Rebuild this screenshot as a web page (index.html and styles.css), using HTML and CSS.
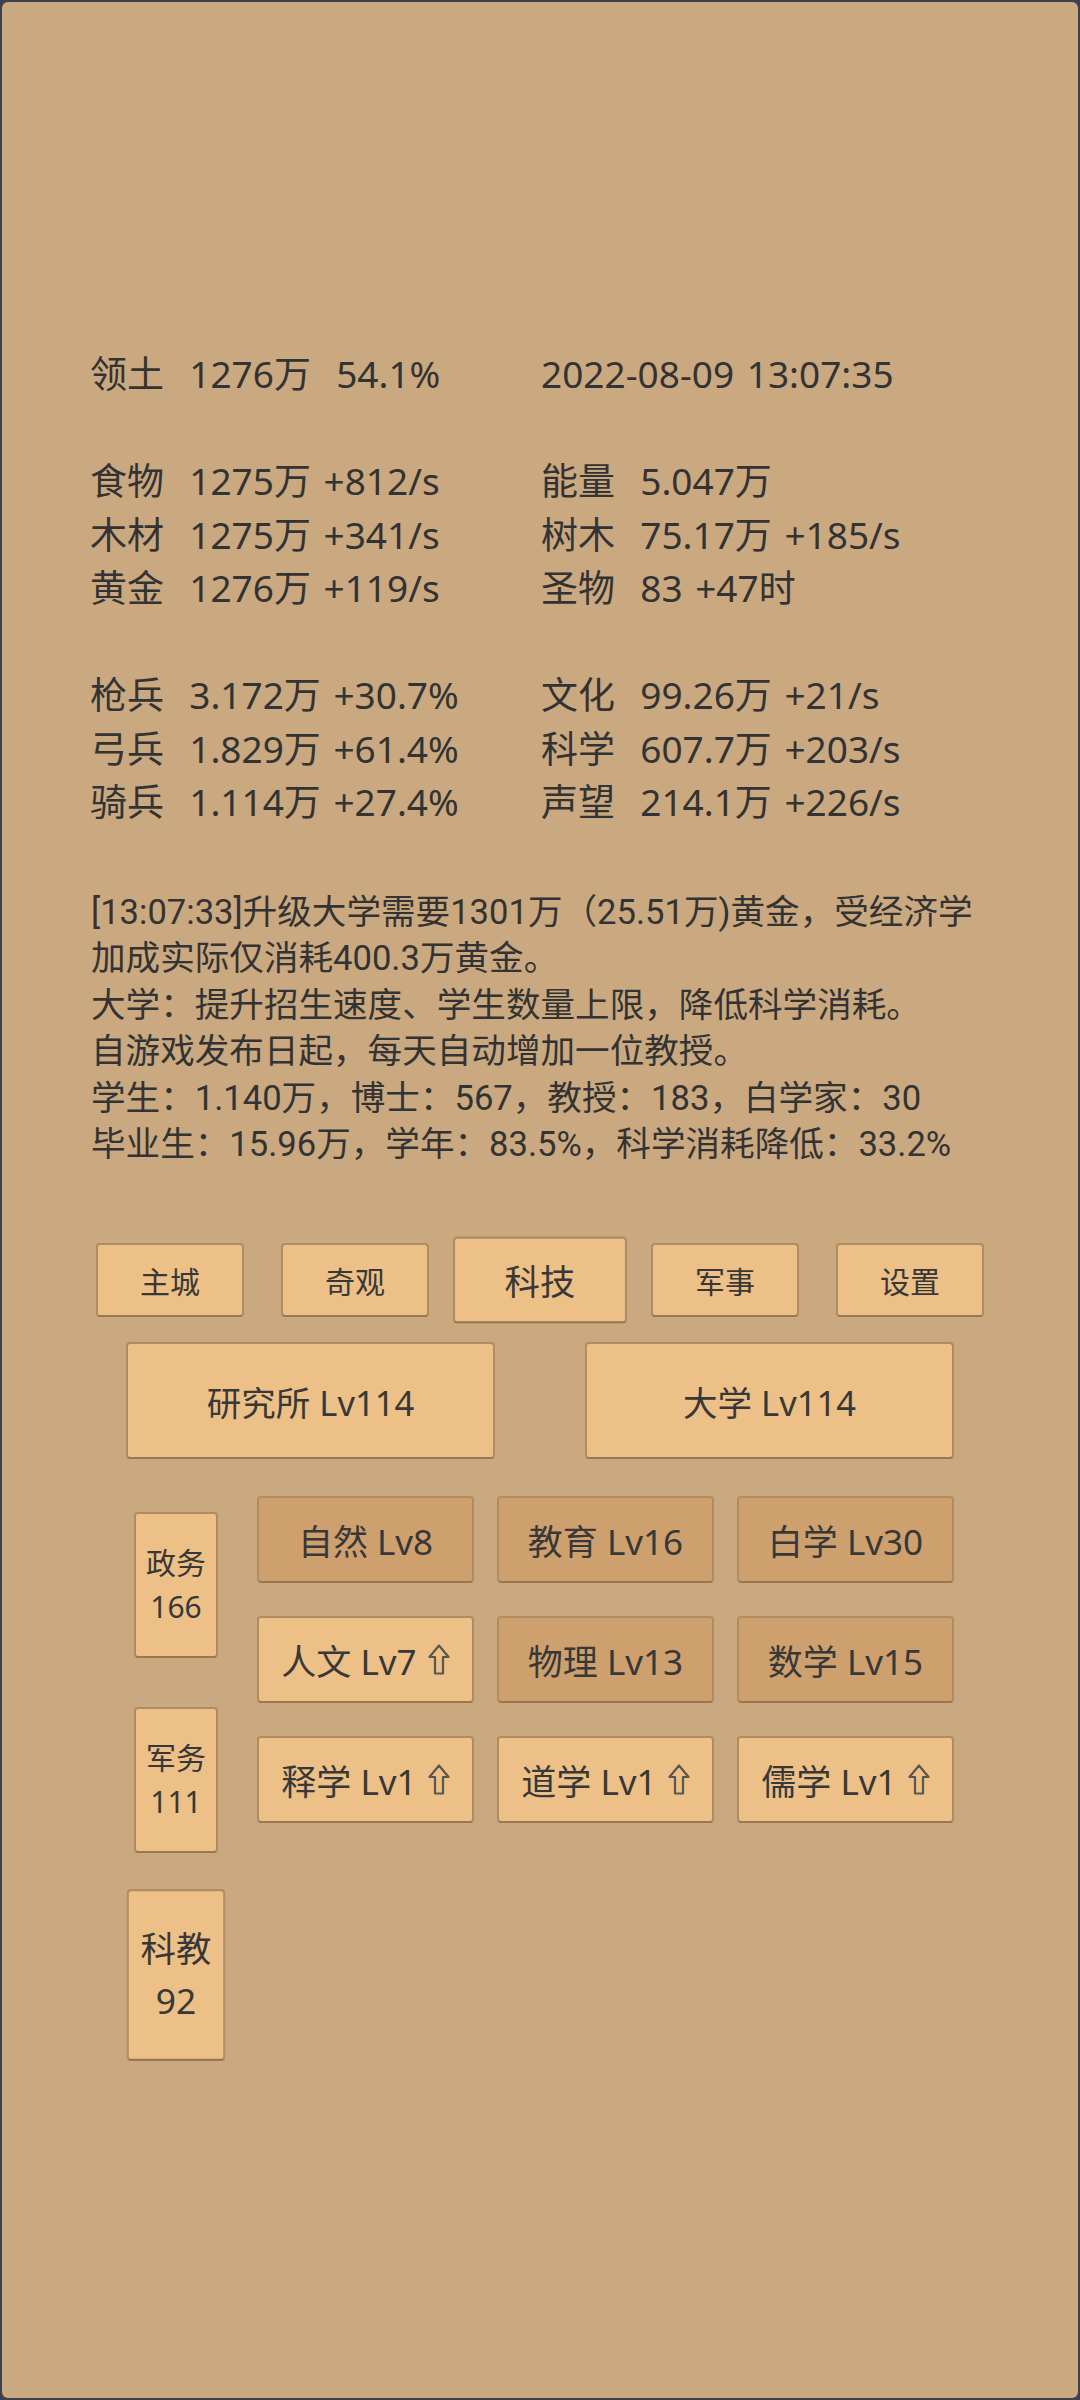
FILE: index.html
```html
<!DOCTYPE html>
<html lang="zh">
<head>
  <meta charset="UTF-8">
  <meta name="viewport" content="width=device-width, initial-scale=1.0">
  <title>科技</title>
  <link rel="stylesheet" href="styles.css">
</head>
<body>
  <div class="screen">

    <div class="stats">
      <div class="cell">领土  1276万  54.1%</div>
      <div class="cell">2022-08-09 13:07:35</div>
      <div class="blank"></div>
      <div class="cell">食物  1275万 +812/s</div>
      <div class="cell">能量  5.047万</div>
      <div class="cell">木材  1275万 +341/s</div>
      <div class="cell">树木  75.17万 +185/s</div>
      <div class="cell">黄金  1276万 +119/s</div>
      <div class="cell">圣物  83 +47时</div>
      <div class="blank"></div>
      <div class="cell">枪兵  3.172万 +30.7%</div>
      <div class="cell">文化  99.26万 +21/s</div>
      <div class="cell">弓兵  1.829万 +61.4%</div>
      <div class="cell">科学  607.7万 +203/s</div>
      <div class="cell">骑兵  1.114万 +27.4%</div>
      <div class="cell">声望  214.1万 +226/s</div>
    </div>

    <div class="log">
      <p>[13:07:33]升级大学需要1301万（25.51万)黄金，受经济学加成实际仅消耗400.3万黄金。</p>
      <p>大学：提升招生速度、学生数量上限，降低科学消耗。</p>
      <p>自游戏发布日起，每天自动增加一位教授。</p>
      <p>学生：1.140万，博士：567，教授：183，白学家：30</p>
      <p>毕业生：15.96万，学年：83.5%，科学消耗降低：33.2%</p>
    </div>

    <div class="tabs">
      <button class="btn tab">主城</button>
      <button class="btn tab">奇观</button>
      <button class="btn tab active">科技</button>
      <button class="btn tab">军事</button>
      <button class="btn tab">设置</button>
    </div>

    <div class="buildings">
      <button class="btn building">研究所 Lv114</button>
      <button class="btn building">大学 Lv114</button>
    </div>

    <div class="tech">
      <div class="branches">
        <button class="btn branch">政务<br>166</button>
        <button class="btn branch">军务<br>111</button>
        <button class="btn branch active">科教<br>92</button>
      </div>

      <div class="grid">
        <button class="btn item dim">自然 Lv8</button>
        <button class="btn item dim">教育 Lv16</button>
        <button class="btn item dim">白学 Lv30</button>
        <button class="btn item">人文 Lv7 <svg class="up" viewBox="0 0 22 31"><path d="M11 1.5L20.5 13H15V29.5H7V13H1.5Z"/></svg></button>
        <button class="btn item dim">物理 Lv13</button>
        <button class="btn item dim">数学 Lv15</button>
        <button class="btn item">释学 Lv1 <svg class="up" viewBox="0 0 22 31"><path d="M11 1.5L20.5 13H15V29.5H7V13H1.5Z"/></svg></button>
        <button class="btn item">道学 Lv1 <svg class="up" viewBox="0 0 22 31"><path d="M11 1.5L20.5 13H15V29.5H7V13H1.5Z"/></svg></button>
        <button class="btn item">儒学 Lv1 <svg class="up" viewBox="0 0 22 31"><path d="M11 1.5L20.5 13H15V29.5H7V13H1.5Z"/></svg></button>
      </div>
    </div>

  </div>
</body>
</html>
```

FILE: styles.css
```css
html {
  background: #3c4050;
}

body {
  margin: 0;
  font-family: "Noto Sans", "Noto Sans CJK SC", sans-serif;
  color: #333;
}

.screen {
  margin: 2px;
  height: 2396px;
  box-sizing: border-box;
  padding-top: 345px;
  background: #caa981;
  border-radius: 6px;
  overflow: hidden;
}

.stats {
  display: grid;
  grid-template-columns: 451px auto;
  padding-left: 88px;
  font-size: 37px;
  line-height: 53.5px;
  word-spacing: 3px;
}

.stats .cell {
  white-space: pre;
}

.stats .blank {
  grid-column: 1 / 3;
  height: 53.5px;
}

.log {
  margin: 60px 89px 0;
  font-family: Roboto, "Noto Sans CJK SC", sans-serif;
  font-size: 34.6px;
  line-height: 46.6px;
}

.log p {
  margin: 0;
}

.btn {
  box-sizing: border-box;
  display: flex;
  align-items: center;
  justify-content: center;
  padding: 0;
  background: #ecc086;
  border: 2px solid #b08c62;
  border-bottom-color: #9a774f;
  border-radius: 4px;
  font-family: "Noto Sans", "Noto Sans CJK SC", sans-serif;
  color: #383838;
}

.btn.dim {
  background: #cda06e;
}

.btn.active {
  transform: scale(1.18);
}

.tabs {
  display: flex;
  justify-content: space-between;
  width: 888px;
  margin: 75px auto 0;
}

.tab {
  width: 148px;
  height: 74px;
  font-size: 30px;
}

.buildings {
  display: flex;
  justify-content: center;
  gap: 90px;
  margin-top: 25px;
}

.building {
  width: 369px;
  height: 117px;
  font-size: 34.5px;
}

.tech {
  display: flex;
  width: 828px;
  margin: 37px auto 0;
}

.branches {
  display: flex;
  flex-direction: column;
  gap: 49px;
  margin: 16px 0 0 8px;
}

.branch {
  width: 84px;
  height: 146px;
  font-size: 30px;
  line-height: 44px;
}

.grid {
  display: grid;
  grid-template-columns: repeat(3, 217px);
  grid-auto-rows: 87px;
  column-gap: 23px;
  row-gap: 33px;
  margin-left: 39px;
}

.item {
  font-size: 35px;
  white-space: pre;
}

.up {
  width: 22px;
  height: 31px;
  margin-left: 2px;
  fill: none;
  stroke: #5a5650;
  stroke-width: 2.2;
  stroke-linejoin: round;
}
```
